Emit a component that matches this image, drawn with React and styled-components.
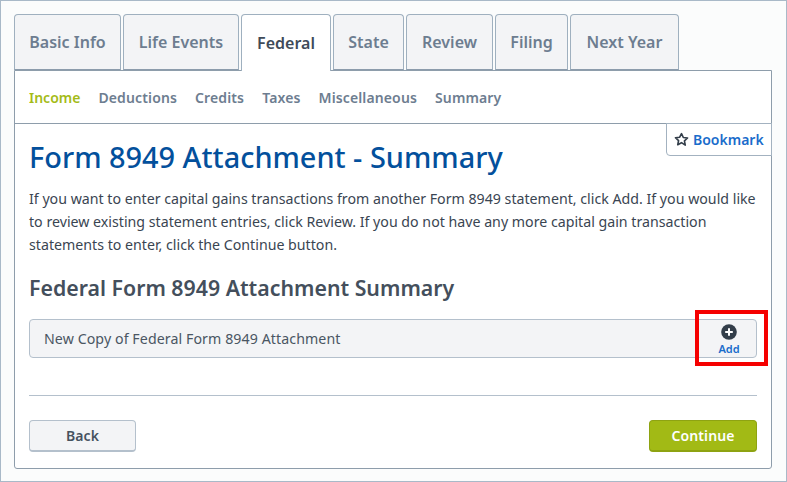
import React from 'react'
import styled, { createGlobalStyle } from 'styled-components'

const GlobalStyle = createGlobalStyle`
  html, body {
    margin: 0;
    padding: 0;
  }
  body {
    font-family: "Noto Sans", "Open Sans", sans-serif;
  }
  * {
    box-sizing: border-box;
  }
`

const Frame = styled.div`
  width: 787px;
  height: 482px;
  padding: 13px 14px 11px 13px;
  background: #fbfcfc;
  border: 1px solid #a9b9c8;
  overflow: hidden;
`

const Tabs = styled.div`
  display: flex;
  gap: 2px;
  height: 57px;
  position: relative;
  z-index: 1;
`

const Tab = styled.div`
  width: ${p => p.$w}px;
  height: ${p => (p.$active ? 57 : 56)}px;
  display: flex;
  align-items: center;
  justify-content: center;
  padding-bottom: 1px;
  font-size: 16px;
  font-weight: 600;
  color: ${p => (p.$active ? '#3f4b59' : '#6d7d90')};
  background: ${p => (p.$active ? '#fff' : '#f3f4f6')};
  border: 1px solid #9fb0bf;
  border-bottom: ${p => (p.$active ? 'none' : '1px solid #8c9cac')};
  border-radius: 4px 4px 0 0;
`

const Panel = styled.div`
  height: 399px;
  margin-top: -1px;
  background: #fff;
  border: 1px solid #8e9dab;
  border-radius: 0 0 3px 3px;
  display: flex;
  flex-direction: column;
  position: relative;
`

const SubNav = styled.div`
  height: 53px;
  flex: none;
  display: flex;
  align-items: center;
  gap: 18px;
  padding: 1px 14px 0;
  border-bottom: 1px solid #8e9dab;
`

const SubLink = styled.span`
  font-size: 14px;
  letter-spacing: ${p => (p.$active ? '0' : '0.13px')};
  font-weight: 600;
  color: ${p => (p.$active ? '#a4bb17' : '#6d7d90')};
`

const Content = styled.div`
  flex: 1;
  display: flex;
  flex-direction: column;
  padding: 12px 14px 16px;
  position: relative;
`

const BookmarkTab = styled.div`
  position: absolute;
  top: -1px;
  right: -1px;
  width: 106px;
  height: 33px;
  display: flex;
  align-items: center;
  gap: 4px;
  padding-left: 7px;
  background: #fff;
  border: 1px solid #a3b2c0;
  border-radius: 0 0 0 4px;
  font-size: 14px;
  font-weight: 600;
  color: #1a6ccb;
`

const Title = styled.h1`
  margin: 0;
  font-size: 28.9px;
  line-height: 41px;
  font-weight: 500;
  color: #03509c;
`

const Intro = styled.p`
  margin: 10px 0 0;
  font-size: 14.2px;
  line-height: 23px;
  color: #3a4552;
`

const SectionTitle = styled.h2`
  margin: 17px 0 0;
  font-size: 21.3px;
  line-height: 30px;
  font-weight: 600;
  color: #444f5c;
`

const AddRow = styled.div`
  height: 39px;
  margin-top: 16px;
  flex: none;
  display: flex;
  align-items: center;
  justify-content: space-between;
  padding-left: 14px;
  background: #f3f4f6;
  border: 1px solid #b4c0cc;
  border-radius: 4px;
  font-size: 14.2px;
  letter-spacing: 0.08px;
  color: #4a5663;
`

const AddButton = styled.div`
  width: 54px;
  height: 37px;
  display: flex;
  flex-direction: column;
  align-items: center;
  justify-content: flex-start;
  padding-top: 4px;
  font-size: 11px;
  line-height: 18px;
  letter-spacing: 0;
  font-weight: 600;
  color: #1a6ccb;

  svg {
    flex: none;
  }
`

const Highlight = styled.div`
  position: absolute;
  left: 680px;
  top: 186px;
  width: 73px;
  height: 56px;
  border: 4px solid #f50000;
  pointer-events: none;
`

const Divider = styled.div`
  height: 1px;
  flex: none;
  margin-top: 37px;
  background: #b4c0cc;
`

const Footer = styled.div`
  margin-top: auto;
  display: flex;
  justify-content: space-between;
`

const Button = styled.div`
  width: ${p => p.$w}px;
  height: 32px;
  display: flex;
  align-items: center;
  justify-content: center;
  font-size: 14px;
  letter-spacing: 0.13px;
  font-weight: 600;
  border-radius: 4px;
  color: ${p => (p.$primary ? '#fff' : '#46525f')};
  background: ${p => (p.$primary ? '#a2ba15' : '#f3f4f6')};
  border: 1px solid ${p => (p.$primary ? '#8ea312' : '#b4c0cc')};
  border-bottom-width: 2px;
`

const StarIcon = () => (
  <svg width="15" height="15" viewBox="0 0 24 24" fill="none" stroke="#333e4a" strokeWidth="2.6" strokeLinejoin="round">
    <path d="M12 2.6l2.9 6.2 6.8.8-5 4.6 1.3 6.7L12 17.1l-6 3.3 1.3-6.7-5-4.6 6.8-.8z" />
  </svg>
)

const PlusIcon = () => (
  <svg width="16" height="16" viewBox="0 0 16 16">
    <circle cx="8" cy="8" r="7.8" fill="#333e4a" />
    <path d="M8 4.2v7.6M4.2 8h7.6" stroke="#fff" strokeWidth="2" />
  </svg>
)

const tabs = [
  ['Basic Info', 107],
  ['Life Events', 116],
  ['Federal', 90],
  ['State', 71],
  ['Review', 87],
  ['Filing', 73],
  ['Next Year', 109],
]

const links = ['Income', 'Deductions', 'Credits', 'Taxes', 'Miscellaneous', 'Summary']

export default function App() {
  return (
    <Frame>
      <GlobalStyle />
      <Tabs>
        {tabs.map(([name, w]) => (
          <Tab key={name} $w={w} $active={name === 'Federal'}>{name}</Tab>
        ))}
      </Tabs>
      <Panel>
        <SubNav>
          {links.map(l => (
            <SubLink key={l} $active={l === 'Income'}>{l}</SubLink>
          ))}
        </SubNav>
        <Content>
          <BookmarkTab><StarIcon />Bookmark</BookmarkTab>
          <Title>Form 8949 Attachment - Summary</Title>
          <Intro>
            If you want to enter capital gains transactions from another Form 8949 statement, click Add. If you would like
            to review existing statement entries, click Review. If you do not have any more capital gain transaction
            statements to enter, click the Continue button.
          </Intro>
          <SectionTitle>Federal Form 8949 Attachment Summary</SectionTitle>
          <AddRow>
            New Copy of Federal Form 8949 Attachment
            <AddButton><PlusIcon />Add</AddButton>
          </AddRow>
          <Highlight />
          <Divider />
          <Footer>
            <Button $w={107}>Back</Button>
            <Button $w={108} $primary>Continue</Button>
          </Footer>
        </Content>
      </Panel>
    </Frame>
  )
}
